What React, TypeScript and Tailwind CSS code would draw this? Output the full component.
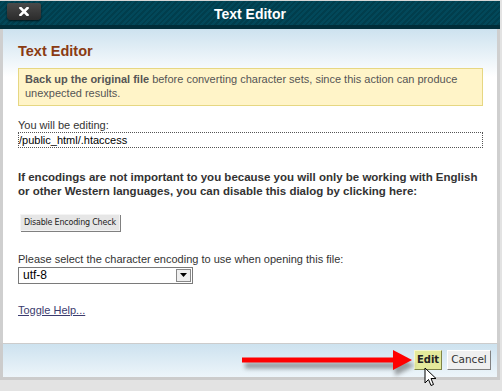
import React from 'react'

const Arrow = () => (
  <svg className="absolute left-[238px] top-[346px]" width="182" height="34" viewBox="0 0 182 34">
    <defs>
      <filter id="sh" x="-10%" y="-50%" width="120%" height="200%">
        <feGaussianBlur stdDeviation="2" />
      </filter>
    </defs>
    <g filter="url(#sh)" opacity="0.55" transform="translate(3,5)">
      <rect x="4" y="11.5" width="156" height="6" fill="#555" />
      <polygon points="154,4 174,14.5 154,25" fill="#555" />
    </g>
    <rect x="4" y="11.5" width="156" height="5" fill="#f00" />
    <polygon points="155,4 174,14 155,24" fill="#f00" />
  </svg>
)

const Cursor = () => (
  <svg className="absolute left-[424px] top-[367px]" width="14" height="21" viewBox="0 0 14 21">
    <path d="M1 1 L1 16 L4.5 12.5 L7 18.5 L9.5 17.5 L7 11.5 L12 11.5 Z" fill="#fff" stroke="#000" strokeWidth="1" strokeLinejoin="miter" />
  </svg>
)

export default function App() {
  return (
    <div className="relative w-[502px] h-[391px] overflow-hidden bg-[#e3e3e3] font-['Liberation_Sans',Arial,sans-serif]">
      <div className="w-[500px] pt-px bg-[#d6d6d6]">
        {/* Header */}
        <div className="relative h-[28px] flex flex-col">
          <div className="h-[24px] bg-[repeating-linear-gradient(135deg,#013e4d_0px,#013e4d_2px,#02485a_2px,#02485a_4px)] flex items-center justify-center">
            <span className="text-white font-bold text-[14px] leading-none mt-[2px]">Text Editor</span>
          </div>
          <div className="h-[4px] bg-[#002d39]" />
          <button className="absolute left-[7px] top-[2px] w-[34px] h-[17px] rounded-b-[4px] rounded-t-[2px] bg-gradient-to-b from-[#4a4a4a] to-[#2c2c2c] shadow-[0_1px_2px_rgba(0,0,0,0.7)] flex items-center justify-center">
            <svg width="10" height="9" viewBox="0 0 10 9">
              <path d="M1.5 1 L8.5 8 M8.5 1 L1.5 8" stroke="#fff" strokeWidth="2.6" strokeLinecap="square" />
            </svg>
          </button>
        </div>

        {/* Body */}
        <div className="border-x-[3px] border-[#cfcfcf] bg-[linear-gradient(to_bottom,#cde2ef_0px,#ffffff_48px)] pl-[15px] pr-[14px] pt-[14px] h-[314px]">
          <h2 className="text-[14.5px] font-bold text-[#8a3b12] leading-[17px]">Text Editor</h2>

          <div className="mt-[8px] border border-[#e6d782] bg-[#fff4c8] px-[6px] pt-[3px] pb-[5px] text-[11px] leading-[14px] text-[#555]">
            <b>Back up the original file</b> before converting character sets, since this action can produce unexpected results.
          </div>

          <div className="mt-[13px] text-[11px] leading-[13px] text-[#333]">You will be editing:</div>
          <div className="border border-dotted border-[#555] h-[16px] text-[11px] leading-[14px] text-black pl-0">/public_html/.htaccess</div>

          <p className="mt-[22px] text-[11.5px] font-bold leading-[14px] text-[#333]">
            If encodings are not important to you because you will only be working with English or other Western languages, you can disable this dialog by clicking here:
          </p>

          <button className="mt-[16px] ml-[2px] h-[17px] px-[3px] bg-[#e6e6e6] border border-[#f4f4f4] shadow-[1px_1px_0_#808080] text-[8px] text-[#222] font-['DejaVu_Sans',Tahoma,sans-serif] leading-none tracking-[-0.2px]">
            Disable Encoding Check
          </button>

          <div className="mt-[21px] text-[11px] leading-[13px] text-[#333]">Please select the character encoding to use when opening this file:</div>
          <div className="mt-[1px] w-[175px] h-[17px] border border-[#7a7a7a] bg-white flex items-center justify-between">
            <span className="text-[12px] pl-[4px] text-black leading-none">utf-8</span>
            <span className="w-[15px] h-[13px] mr-px border border-[#888] bg-[#efefef] flex items-center justify-center">
              <svg width="7" height="4" viewBox="0 0 7 4"><path d="M0 0 H7 L3.5 4 Z" fill="#000" /></svg>
            </span>
          </div>

          <a className="block mt-[20px] text-[11px] leading-[13px] text-[#3b3b6e] underline w-fit">Toggle Help...</a>
        </div>

        {/* Footer */}
        <div className="border-x-[3px] border-t-[1px] border-b-[3px] border-[#cccccc] h-[37px] bg-gradient-to-b from-[#cde2ef] to-[#edf5fa] flex items-center justify-end gap-[5px] pr-[6px] pb-[2px]">
          <button className="w-[28px] h-[20px] bg-[#e4ea9b] border border-t-[#f5f8d0] border-l-[#f5f8d0] border-r-[#7f8446] border-b-[#7f8446] text-[10px] font-bold text-[#222] font-['DejaVu_Sans',Verdana,sans-serif] leading-none">
            Edit
          </button>
          <button className="w-[44px] h-[20px] bg-[#efefef] border border-t-white border-l-white border-r-[#808080] border-b-[#808080] text-[10.5px] text-[#333] font-['DejaVu_Sans',Verdana,sans-serif] leading-none">
            Cancel
          </button>
        </div>
      </div>

      <Arrow />
      <Cursor />
    </div>
  )
}
